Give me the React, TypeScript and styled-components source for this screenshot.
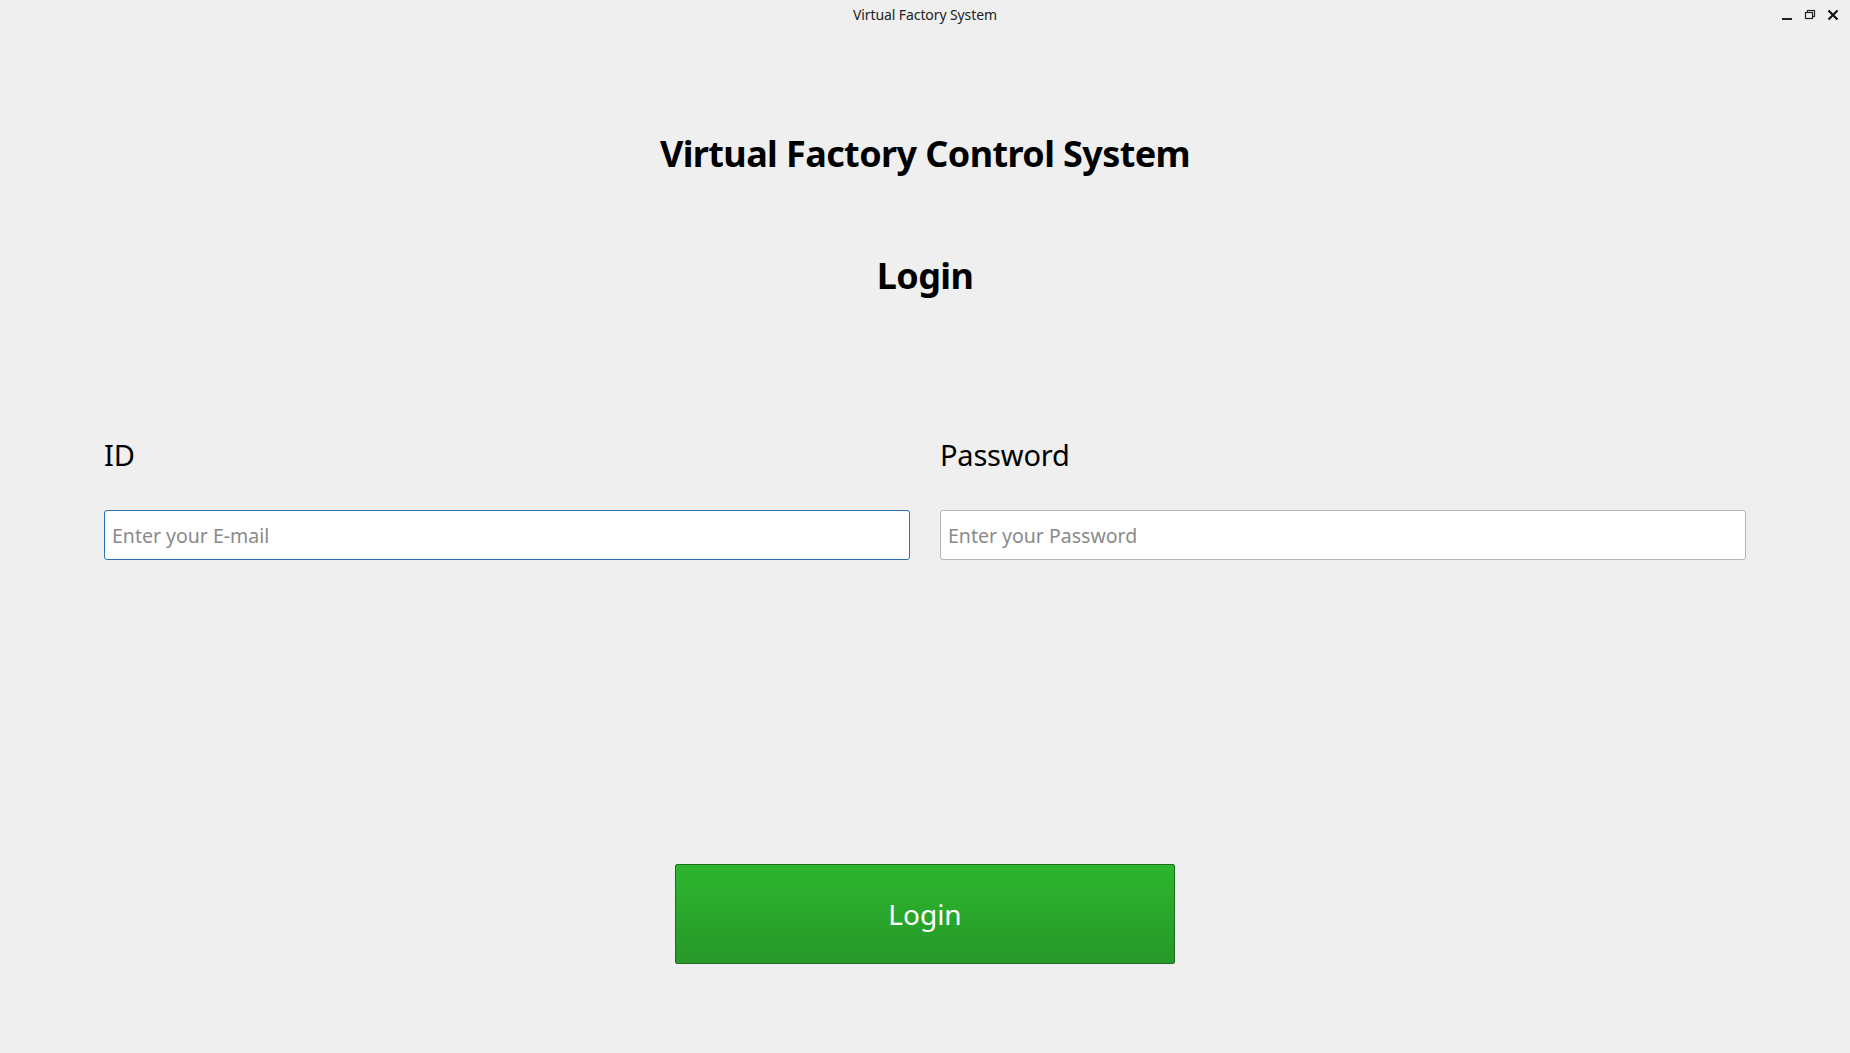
import React from "react";
import styled, { createGlobalStyle } from "styled-components";

const GlobalStyle = createGlobalStyle`
  html, body {
    margin: 0;
    padding: 0;
    background: #efefef;
  }
  body {
    font-family: "Noto Sans", "DejaVu Sans", sans-serif;
    color: #000;
  }
  * { box-sizing: border-box; }
`;

const Window = styled.div`
  width: 1850px;
  height: 1053px;
  background: #efefef;
  display: flex;
  flex-direction: column;
  overflow: hidden;
`;

const TitleBar = styled.div`
  height: 30px;
  display: grid;
  grid-template-columns: 1fr auto 1fr;
  align-items: center;
`;

const TitleText = styled.div`
  grid-column: 2;
  font-size: 14px;
  color: #222;
  line-height: 30px;
  letter-spacing: -0.1px;
`;

const Controls = styled.div`
  grid-column: 3;
  justify-self: end;
  display: flex;
  align-items: center;
  gap: 11px;
  height: 30px;
  padding-right: 11px;
`;

const CtrlIcon = styled.svg`
  width: 12px;
  height: 12px;
  display: block;
`;

const Content = styled.main`
  flex: 1;
  display: flex;
  flex-direction: column;
  align-items: stretch;
  padding: 102px 104px 0;
`;

const Heading = styled.h1<{ $gap?: number }>`
  margin: 0;
  margin-top: ${(p) => p.$gap ?? 0}px;
  text-align: center;
  font-size: 36px;
  line-height: 44px;
  font-weight: 700;
  letter-spacing: -0.6px;
`;

const FieldRow = styled.div`
  margin-top: 139px;
  display: grid;
  grid-template-columns: 1fr 1fr;
  column-gap: 30px;
`;

const Field = styled.div`
  display: flex;
  flex-direction: column;
`;

const Label = styled.label`
  font-size: 29px;
  line-height: 36px;
  font-weight: 400;
  letter-spacing: -0.2px;
  margin-bottom: 37px;
`;

const Input = styled.input<{ $focused?: boolean }>`
  height: 50px;
  width: 100%;
  border: 1px solid ${(p) => (p.$focused ? "#2a72b5" : "#b5b5b5")};
  border-radius: 3px;
  background: #fff;
  padding: 0 7px;
  font-family: "Noto Sans", "DejaVu Sans", sans-serif;
  font-size: 19.5px;
  color: #222;
  outline: none;
  caret-color: #000;
  &::placeholder {
    color: #8a8a8a;
  }
`;

const ButtonRow = styled.div`
  margin-top: 304px;
  display: flex;
  justify-content: center;
`;

const LoginButton = styled.button`
  width: 500px;
  height: 100px;
  border: 1px solid #1c6e1c;
  border-radius: 2px;
  background: linear-gradient(to bottom, #2db62f 0%, #2aa72b 50%, #27982a 100%);
  color: #fff;
  font-family: "Noto Sans", "DejaVu Sans", sans-serif;
  font-size: 28px;
  font-weight: 400;
  cursor: pointer;
  padding: 0;
`;

export default function App() {
  return (
    <>
      <GlobalStyle />
      <Window>
        <TitleBar>
          <TitleText>Virtual Factory System</TitleText>
          <Controls>
            <CtrlIcon viewBox="0 0 12 12">
              <rect x="1" y="9" width="10" height="2" fill="#222" />
            </CtrlIcon>
            <CtrlIcon viewBox="0 0 12 12">
              <rect x="3.5" y="1.5" width="7" height="6" fill="none" stroke="#222" strokeWidth="1.2" />
              <rect x="1.5" y="3.5" width="7" height="6" fill="#efefef" stroke="#222" strokeWidth="1.2" />
            </CtrlIcon>
            <CtrlIcon viewBox="0 0 12 12">
              <path d="M1.5 1.5 L10.5 10.5 M10.5 1.5 L1.5 10.5" stroke="#111" strokeWidth="2.2" strokeLinecap="butt" />
            </CtrlIcon>
          </Controls>
        </TitleBar>
        <Content>
          <Heading>Virtual Factory Control System</Heading>
          <Heading $gap={78}>Login</Heading>
          <FieldRow>
            <Field>
              <Label htmlFor="id">ID</Label>
              <Input id="id" $focused placeholder="Enter your E-mail" autoFocus />
            </Field>
            <Field>
              <Label htmlFor="pw">Password</Label>
              <Input id="pw" type="password" placeholder="Enter your Password" />
            </Field>
          </FieldRow>
          <ButtonRow>
            <LoginButton>Login</LoginButton>
          </ButtonRow>
        </Content>
      </Window>
    </>
  );
}
